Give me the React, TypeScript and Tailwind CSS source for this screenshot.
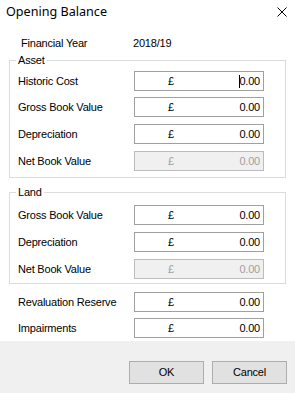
import React from "react";

function Money({ disabled, caret }: { disabled?: boolean; caret?: boolean }) {
  return (
    <div
      className={
        "w-[130px] h-[20px] border flex items-center " +
        (disabled
          ? "bg-[#f0f0f0] border-[#bcbcbc] text-[#a0a0a0]"
          : "bg-white border-[#a0a0a0] text-black")
      }
    >
      <span className="ml-[33px]">£</span>
      <span className="flex-1 text-right pr-[3px] flex justify-end items-center">
        {caret && <span className="inline-block w-px h-[13px] bg-black -mr-[1px]" />}
        <span>0.00</span>
      </span>
    </div>
  );
}

function Row({ label, disabled, caret, className }: { label: string; disabled?: boolean; caret?: boolean; className?: string }) {
  return (
    <div className={"flex items-center h-[20px] " + (className ?? "")}>
      <div className="w-[116px]">{label}</div>
      <Money disabled={disabled} caret={caret} />
    </div>
  );
}

export default function App() {
  return (
    <div className="w-[295px] h-[393px] bg-white flex flex-col font-['Liberation_Sans',Arial,sans-serif] text-[11px] tracking-[-0.2px] text-black overflow-hidden">
      <div className="h-[24px] flex items-center justify-between pl-[6px] pr-[8px] shrink-0">
        <span className="font-['Noto_Sans',sans-serif] text-[12.6px] tracking-normal">Opening Balance</span>
        <svg width="10" height="10" viewBox="0 0 10 10" className="block">
          <path d="M0.5 0.5 L9.5 9.5 M9.5 0.5 L0.5 9.5" stroke="#000" strokeWidth="1" fill="none" />
        </svg>
      </div>

      <div className="mt-[10px] h-[18px] flex items-center pl-[21px] shrink-0">
        <div className="w-[112px]">Financial Year</div>
        <div>2018/19</div>
      </div>

      <fieldset className="mt-[2px] mx-[9px] border border-[#dcdcdc] p-0 m-0 min-w-0 shrink-0">
        <legend className="ml-[6px] px-[2px] leading-[13px]">Asset</legend>
        <div className="pl-[8px] pt-[4px] pb-[6px]">
          <Row label="Historic Cost" caret />
          <Row label="Gross Book Value" className="mt-[6px]" />
          <Row label="Depreciation" className="mt-[7px]" />
          <Row label="Net Book Value" disabled className="mt-[7px]" />
        </div>
      </fieldset>

      <fieldset className="mt-[8px] mx-[9px] border border-[#dcdcdc] p-0 min-w-0 shrink-0">
        <legend className="ml-[6px] px-[2px] leading-[13px]">Land</legend>
        <div className="pl-[8px] pt-[6px] pb-[4px]">
          <Row label="Gross Book Value" />
          <Row label="Depreciation" className="mt-[7px]" />
          <Row label="Net Book Value" disabled className="mt-[7px]" />
        </div>
      </fieldset>

      <div className="pl-[18px] shrink-0">
        <Row label="Revaluation Reserve" className="mt-[8px]" />
        <Row label="Impairments" className="mt-[6px]" />
      </div>

      <div className="mt-auto h-[52px] bg-[#f0f0f0] flex justify-end items-start pt-[20px] pr-[8px] gap-[8px] shrink-0">
        <button className="w-[75px] h-[23px] bg-[#e1e1e1] border border-[#adadad] text-[11px]">OK</button>
        <button className="w-[75px] h-[23px] bg-[#e1e1e1] border border-[#adadad] text-[11px]">Cancel</button>
      </div>
    </div>
  );
}
